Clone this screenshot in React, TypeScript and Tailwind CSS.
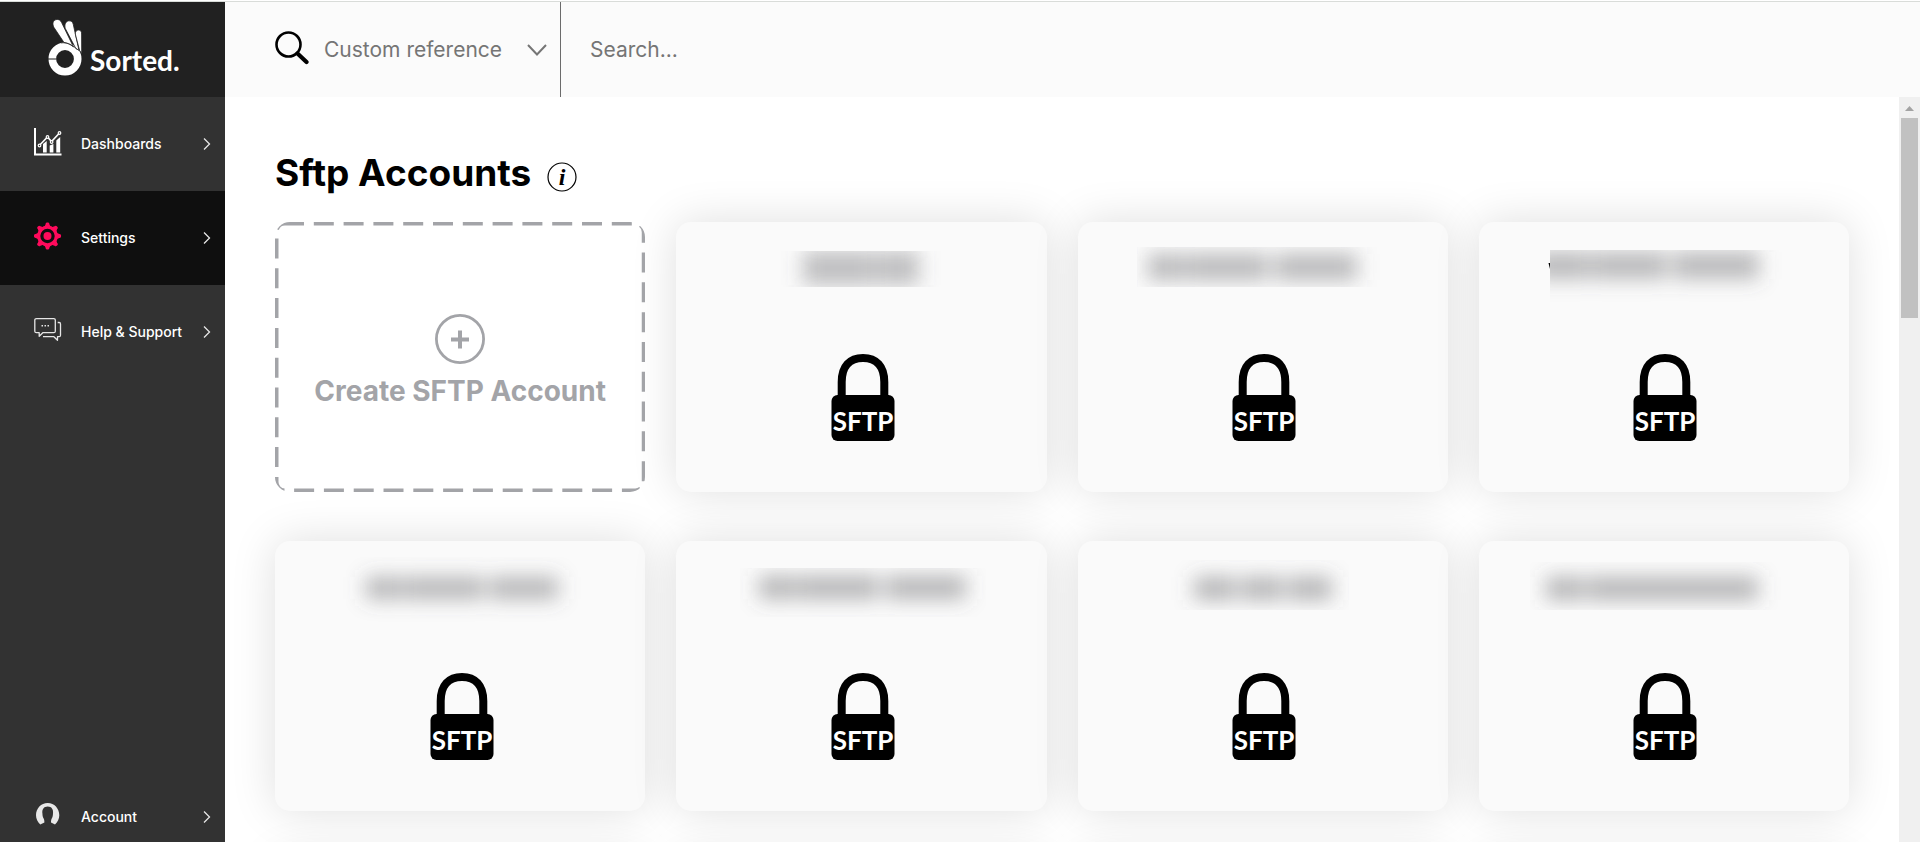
import React from "react";

type Bar = [x: number, width: number];
type Redaction = {
  clip: [x: number, y: number, w: number, h: number];
  y: number;
  height: number;
  opacity: number;
  bars: Bar[];
  tick?: boolean;
};

const accounts: Redaction[] = [
  { clip: [55, 29, 169, 36], y: 29, height: 34, opacity: 0.36, bars: [[82, 72], [156, 42]] },
  { clip: [14, 25, 258, 40], y: 32, height: 26, opacity: 0.4, bars: [[25, 36], [63, 82], [152, 82]] },
  { clip: [26, 28, 240, 60], y: 30, height: 27, opacity: 0.4, bars: [[10, 56], [68, 75], [149, 86]], tick: true },
  { clip: [0, 16, 280, 70], y: 36, height: 22, opacity: 0.43, bars: [[46, 36], [84, 80], [170, 68]] },
  { clip: [19, 27, 246, 49], y: 35, height: 23, opacity: 0.43, bars: [[38, 36], [76, 82], [165, 80]] },
  { clip: [44, 19, 182, 50], y: 36, height: 23, opacity: 0.43, bars: [[71, 42], [118, 42], [165, 44]] },
  { clip: [6, 21, 258, 48], y: 36, height: 23, opacity: 0.43, bars: [[22, 38], [63, 171]] },
];

const pendingCards = [0, 1, 2, 3];

function Logo() {
  return (
    <svg viewBox="0 0 36 58" className="h-[58px] w-9 shrink-0" aria-hidden="true">
      <circle cx="17" cy="40" r="12.700" fill="none" stroke="#fff" strokeWidth="7.600" />
      <g stroke="#212121" strokeWidth=".8" strokeLinejoin="round">
        <path d="M16 23.500 L6 8.500 C4 5 5 1.500 8 .6 C10.500 0 12.500 1 13.600 3.500 L25.500 28 C22 25 19 23.900 16 23.500Z" fill="#fff" />
        <path d="M17.300 9.500 C16.200 6 17.500 2.500 20.400 1.900 C23 1.500 24.800 2.900 25.300 5.500 L31 31.500 L27.500 29Z" fill="#fff" />
        <path d="M27.300 15 C27.300 12.300 28.500 11.100 30.500 11 C32.800 11 33.600 12.500 33.600 15 L33.700 35.500 C33.300 34 32.500 32.500 31.600 31.500Z" fill="#fff" />
        <path d="M0 40 H8" strokeWidth="1" />
        <path d="M13 24 C18 23 25 25.500 29.500 31" fill="none" strokeWidth=".7" />
      </g>
    </svg>
  );
}

function DashboardIcon() {
  return (
    <svg viewBox="0 0 28 28" className="size-7" aria-hidden="true" fill="none" stroke="#fff">
      <path d="M1 0 V26.500 H27.500" strokeWidth="2" />
      <path d="M5.800 17 L13.500 9 L17.500 13.500 L25.500 5" strokeWidth="1.600" />
      <g fill="#323232" strokeWidth="1.200">
        <circle cx="5.500" cy="17.500" r="1.300" />
        <circle cx="13.500" cy="9" r="1.300" />
        <circle cx="17.600" cy="14" r="1.300" />
        <circle cx="25.500" cy="5" r="1.300" />
      </g>
      <path d="M9 16 L12.700 13 V24.500 H9Z M15.700 17.500 L19.400 16 V24.500 H15.700Z M22.300 12.500 L26.200 9 V24.500 H22.300Z" fill="#fff" stroke="none" />
    </svg>
  );
}

function GearIcon() {
  return (
    <svg viewBox="0 0 28 28" className="size-7" aria-hidden="true">
      <g fill="#ff0a5c">
        {[0, 45, 90, 135, 180, 225, 270, 315].map((a) => (
          <path key={a} d="M10 5.500 L11.600 2.200 C11.500 1 12.200 .4 13.500 .4 C14.800 .4 15.500 1 15.400 2.200 L17 5.500Z" transform={`rotate(${a} 13.500 14)`} />
        ))}
      </g>
      <circle cx="13.500" cy="14" r="8.800" fill="none" stroke="#ff0a5c" strokeWidth="3.200" />
      <circle cx="13.500" cy="14" r="4" fill="#ff0a5c" />
    </svg>
  );
}

function ChatIcon() {
  return (
    <svg viewBox="0 0 28 28" className="size-7" aria-hidden="true" fill="none" stroke="#e6e6e6" strokeWidth="1.300" strokeLinejoin="round">
      <path d="M2.500 2.600 H19.800 C20.800 2.600 21.300 3.200 21.300 4 V15.200 C21.300 16.200 20.800 16.700 19.800 16.700 H8.800 L5.200 20.300 V16.700 H2.500 C1.400 16.700 .8 16.200 .8 15.200 V4 C.8 3.200 1.400 2.600 2.500 2.600Z" />
      <path d="M23.700 6.500 H25.200 C26.100 6.500 26.500 7 26.500 8 V19.200 C26.500 20.200 26.100 20.700 25.200 20.700 H23.500 V24.300 L19.900 20.700 H9" />
      <path d="M7.500 9.700 H9 M10.500 9.700 H12 M13.500 9.700 H15" strokeWidth="1.500" />
    </svg>
  );
}

function AccountIcon() {
  return (
    <svg viewBox="0 0 28 28" className="size-7" aria-hidden="true">
      <path d="M6.300 23.400 C3.600 21 2 17.800 2 14.200 C2 7.500 7 2 13.700 2 C20.400 2 25.300 7.500 25.300 14.200 C25.300 17.800 23.700 21 21 23.400 L17 21.600 C17 19.800 17.200 18.800 17.500 18 C18.600 16.500 18.900 14.700 19 12.200 C19.500 8.300 17.600 5.400 13.700 5.400 C9.800 5.400 7.900 8.300 8.400 12.200 C8.500 14.700 8.800 16.500 9.900 18 C10.200 18.800 10.400 19.800 10.400 21.600Z" fill="#e8e8e8" />
    </svg>
  );
}

function NavItem({ label, icon, active, short }: { label: string; icon: React.ReactNode; active?: boolean; short?: boolean }) {
  return (
    <a
      href="#"
      aria-current={active ? "page" : undefined}
      className={`flex items-center pr-[14px] pl-[34px] text-white ${short ? "h-[50px]" : "h-[94px]"} ${active ? "bg-[#0f0f0f]" : ""}`}
    >
      <span className="pb-1">{icon}</span>
      <span className="ml-[19px] flex-1 text-[14px] leading-5 font-medium whitespace-nowrap">{label}</span>
      <svg viewBox="0 0 8 14" className="h-[14px] w-2" aria-hidden="true">
        <path d="M1 1.500 L6.500 7 L1 12.500" fill="none" stroke="#e6e6e6" strokeWidth="1.300" />
      </svg>
    </a>
  );
}

function Lock() {
  return (
    <svg viewBox="0 0 64 87" className="ml-[3px] h-[87px] w-16" role="img">
      <path d="M10.700 44 V28 C10.700 12 19 4 32 4 C45 4 53.300 12 53.300 28 V44" fill="none" stroke="#000" strokeWidth="8" />
      <rect x=".5" y="41" width="63" height="46" rx="6" />
      <text x="32" y="77" textAnchor="middle" fill="#fff" className="font-[Lato,sans-serif] text-[26px] font-bold">
        SFTP
      </text>
    </svg>
  );
}

function AccountCard({ data, id }: { data: Redaction; id: number }) {
  const [x, y, w, h] = data.clip;
  return (
    <button type="button" className="flex h-[270px] flex-col items-center rounded-[15px] bg-[#fafafa] shadow-[0_0_45px_rgba(0,0,0,0.13)]">
      <svg viewBox="0 0 280 132" className="h-[132px] w-[280px]" aria-hidden="true">
        <defs>
          <clipPath id={`clip-${id}`}>
            <rect x={x} y={y} width={w} height={h} />
          </clipPath>
          <filter id={`soft-${id}`} filterUnits="userSpaceOnUse" x="-40" y="-40" width="360" height="200">
            <feGaussianBlur stdDeviation="10" />
          </filter>
        </defs>
        {data.tick && <path d="M24.500 41 H26 V47Z" fill="#000" />}
        <g clipPath={`url(#clip-${id})`}>
          <g filter={`url(#soft-${id})`} fill="#5a5a5c" fillOpacity={data.opacity}>
            {data.bars.map(([bx, bw]) => (
              <rect key={bx} x={bx} y={data.y} width={bw} height={data.height} />
            ))}
          </g>
        </g>
      </svg>
      <Lock />
    </button>
  );
}

export default function App() {
  return (
    <div className="flex h-screen flex-col overflow-hidden bg-white font-[Inter,sans-serif]">
      <div className="mt-px h-px shrink-0 bg-[#d9dcd9]" />
      <div className="flex min-h-0 flex-1">
        <aside className="flex w-[225px] shrink-0 flex-col bg-[#323232]">
          <a href="#" className="flex h-[95px] items-center bg-[#212121] pb-1 pl-12 text-white">
            <Logo />
            <span className="ml-1.5 pt-6 font-[Lato,sans-serif] text-[28px] leading-8 font-bold">Sorted.</span>
          </a>
          <nav className="flex flex-1 flex-col">
            <NavItem label="Dashboards" icon={<DashboardIcon />} />
            <NavItem label="Settings" icon={<GearIcon />} active />
            <NavItem label="Help & Support" icon={<ChatIcon />} />
            <div className="mt-auto">
              <NavItem label="Account" icon={<AccountIcon />} short />
            </div>
          </nav>
        </aside>
        <div className="flex min-w-0 flex-1 flex-col">
          <header className="flex h-[95px] shrink-0 items-center bg-[#fbfbfb] pl-[50px] text-[21px] text-[#757575]">
            <svg viewBox="0 0 34 34" className="mb-1 size-[34px] shrink-0" aria-hidden="true" fill="none" stroke="#000">
              <circle cx="13.500" cy="13.500" r="12" strokeWidth="2.600" />
              <path d="M22.500 22.500 L31.500 31" strokeWidth="4.200" strokeLinecap="round" />
            </svg>
            <div className="relative h-full w-[252px] border-r border-[#6b6b6b]">
              <select aria-label="Search field" className="h-full w-full appearance-none bg-transparent pl-[15px] outline-none">
                <option>Custom reference</option>
              </select>
              <svg viewBox="0 0 20 12" className="pointer-events-none absolute top-[42px] right-[13px] h-3 w-5" aria-hidden="true">
                <path d="M1 1 L10 10.500 L19 1" fill="none" stroke="#757575" strokeWidth="2" />
              </svg>
            </div>
            <input aria-label="Search" placeholder="Search..." className="h-full min-w-0 flex-1 bg-transparent pl-[29px] outline-none placeholder:text-[#757575]" />
          </header>
          <div className="flex min-h-0 flex-1">
            <main className="min-w-0 flex-1 overflow-hidden px-[50px] pt-[50px]">
              <div className="flex h-[51px] items-center">
                <h1 className="text-[37px] leading-[50px] font-bold text-black">Sftp Accounts</h1>
                <svg viewBox="0 0 30 30" className="mt-2 ml-4 size-[30px]" aria-hidden="true">
                  <circle cx="15" cy="15" r="14" fill="none" stroke="#000" strokeWidth="1.200" />
                  <text x="15" y="23" textAnchor="middle" className="text-[24px] font-bold italic [font-family:'Liberation_Serif',serif]">i</text>
                </svg>
              </div>
              <div className="mt-6 grid grid-cols-4 gap-x-[31px] gap-y-[49px]">
                <button type="button" className="relative flex h-[270px] flex-col items-center overflow-hidden rounded-[15px] pt-[92px] text-[#a3a4a8]">
                  <svg className="absolute inset-0 size-full" aria-hidden="true">
                    <rect width="100%" height="100%" rx="10" fill="none" stroke="#a3a4a8" strokeWidth="7" strokeDasharray="20 9.800" strokeDashoffset="1" />
                  </svg>
                  <svg viewBox="0 0 50 50" className="size-[50px]" aria-hidden="true" fill="none" stroke="#a3a4a8">
                    <circle cx="25" cy="25" r="23.600" strokeWidth="2.800" />
                    <path d="M16 25.500 H34 M25 16.500 V34.500" strokeWidth="4" />
                  </svg>
                  <span className="mt-[9px] text-[28px] leading-9 font-bold whitespace-nowrap">Create SFTP Account</span>
                </button>
                {accounts.map((a, i) => (
                  <AccountCard key={i} id={i} data={a} />
                ))}
                {pendingCards.map((n) => (
                  <div key={n} className="h-[270px] rounded-[15px] bg-[#fafafa] shadow-[0_0_45px_rgba(0,0,0,0.13)]" />
                ))}
              </div>
            </main>
            <div className="flex w-[21px] shrink-0 flex-col items-center bg-[#f0f0f0]" aria-hidden="true">
              <svg viewBox="0 0 21 21" className="size-[21px]">
                <path d="M6 14 L10.500 9 L15 14Z" fill="#a3a3a3" />
              </svg>
              <div className="h-[200px] w-[17px] bg-[#c1c1c1]" />
            </div>
          </div>
        </div>
      </div>
    </div>
  );
}
